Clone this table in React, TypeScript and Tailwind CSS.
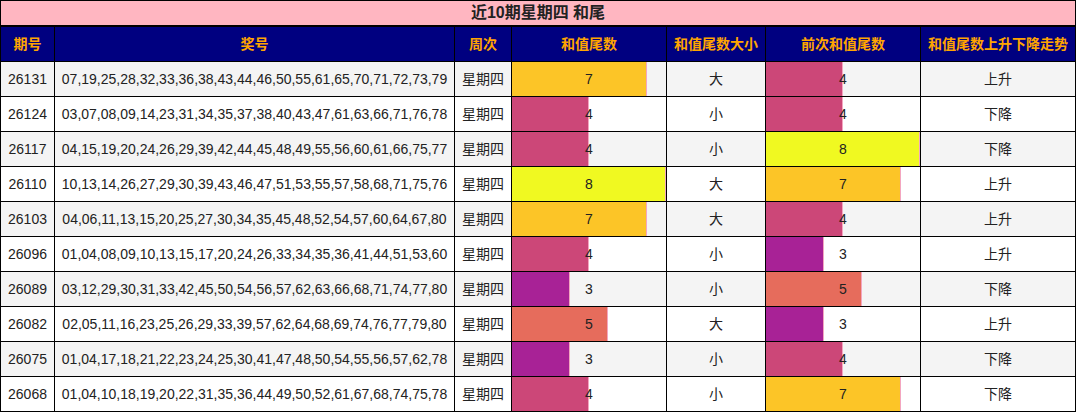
import React from 'react'

// plasma-ish palette keyed by tail digit
const BAR_COLORS: Record<number, string> = {
  3: 'bg-[#a82296]',
  4: 'bg-[#cc4778]',
  5: 'bg-[#e66c5c]',
  7: 'bg-[#fcc527]',
  8: 'bg-[#f0f921]',
}

type Row = { issue: string; nums: string; tail: number; size: string; prev: number; trend: string }

const ROWS: Row[] = [
  { issue: '26131', nums: '07,19,25,28,32,33,36,38,43,44,46,50,55,61,65,70,71,72,73,79', tail: 7, size: '大', prev: 4, trend: '上升' },
  { issue: '26124', nums: '03,07,08,09,14,23,31,34,35,37,38,40,43,47,61,63,66,71,76,78', tail: 4, size: '小', prev: 4, trend: '下降' },
  { issue: '26117', nums: '04,15,19,20,24,26,29,39,42,44,45,48,49,55,56,60,61,66,75,77', tail: 4, size: '小', prev: 8, trend: '下降' },
  { issue: '26110', nums: '10,13,14,26,27,29,30,39,43,46,47,51,53,55,57,58,68,71,75,76', tail: 8, size: '大', prev: 7, trend: '上升' },
  { issue: '26103', nums: '04,06,11,13,15,20,25,27,30,34,35,45,48,52,54,57,60,64,67,80', tail: 7, size: '大', prev: 4, trend: '上升' },
  { issue: '26096', nums: '01,04,08,09,10,13,15,17,20,24,26,33,34,35,36,41,44,51,53,60', tail: 4, size: '小', prev: 3, trend: '上升' },
  { issue: '26089', nums: '03,12,29,30,31,33,42,45,50,54,56,57,62,63,66,68,71,74,77,80', tail: 3, size: '小', prev: 5, trend: '下降' },
  { issue: '26082', nums: '02,05,11,16,23,25,26,29,33,39,57,62,64,68,69,74,76,77,79,80', tail: 5, size: '大', prev: 3, trend: '上升' },
  { issue: '26075', nums: '01,04,17,18,21,22,23,24,25,30,41,47,48,50,54,55,56,57,62,78', tail: 3, size: '小', prev: 4, trend: '下降' },
  { issue: '26068', nums: '01,04,10,18,19,20,22,31,35,36,44,49,50,52,61,67,68,74,75,78', tail: 4, size: '小', prev: 7, trend: '下降' },
]

const HEADERS = ['期号', '奖号', '周次', '和值尾数', '和值尾数大小', '前次和值尾数', '和值尾数上升下降走势']

const GRID = 'grid grid-cols-[53px_399px_56px_154px_98px_154px_154px] gap-x-px'

function BarCell({ value, bg }: { value: number; bg: string }) {
  return (
    <div className={`relative h-[34px] ${bg}`}>
      <div
        className={`absolute inset-y-0 left-0 border-r border-[#f3a6c0] ${BAR_COLORS[value]}`}
        style={{ width: `${(value / 8) * 100}%` }}
      />
      <span className="relative flex h-full items-center justify-center">{value}</span>
    </div>
  )
}

export default function App() {
  return (
    <div
      className="w-[1076px] border border-black bg-black text-[14px] text-[#222]"
      style={{ fontFamily: '"Liberation Sans", Arial, "Noto Sans CJK SC", sans-serif' }}
    >
      {/* ── Title ─────────────────────────────────────────────── */}
      <div className="flex h-[24px] items-center justify-center bg-[#ffb6c1] text-[16px] font-bold text-[#222]">
        近10期星期四 和尾
      </div>

      {/* ── Column headers ────────────────────────────────────── */}
      <div className={`${GRID} mt-[2px]`}>
        {HEADERS.map((h) => (
          <div key={h} className="flex h-[34px] items-center justify-center bg-[#000080] font-bold text-[#ffa500]">
            {h}
          </div>
        ))}
      </div>

      {/* ── Rows ──────────────────────────────────────────────── */}
      {ROWS.map((r, i) => {
        const bg = i % 2 === 0 ? 'bg-[#f4f4f4]' : 'bg-white'
        const cell = `flex h-[34px] items-center justify-center ${bg}`
        return (
          <div key={r.issue} className={`${GRID} mt-px`}>
            <div className={cell}>{r.issue}</div>
            <div className={cell}>{r.nums}</div>
            <div className={cell}>星期四</div>
            <BarCell value={r.tail} bg={bg} />
            <div className={cell}>{r.size}</div>
            <BarCell value={r.prev} bg={bg} />
            <div className={cell}>{r.trend}</div>
          </div>
        )
      })}
    </div>
  )
}
